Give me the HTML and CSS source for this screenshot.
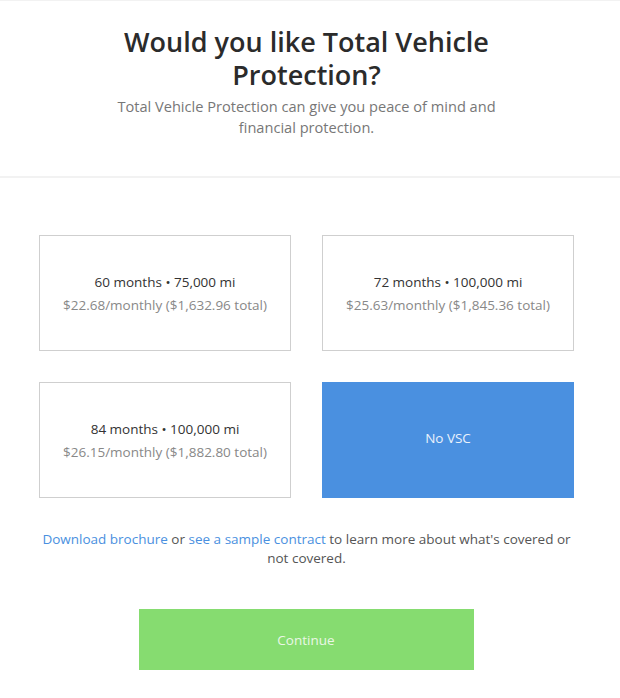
FILE: index.html
```html
<!DOCTYPE html>
<html>
<head>
<meta charset="utf-8">
<link rel="stylesheet" href="styles.css">
</head>
<body>
<div class="page">
  <header class="header">
    <h1 class="title">Would you like Total Vehicle Protection?</h1>
    <p class="subtitle">Total Vehicle Protection can give you peace of mind and financial protection.</p>
  </header>
  <main class="content">
    <div class="options">
      <div class="option">
        <div class="term">60 months • 75,000 mi</div>
        <div class="price">$22.68/monthly ($1,632.96 total)</div>
      </div>
      <div class="option">
        <div class="term">72 months • 100,000 mi</div>
        <div class="price">$25.63/monthly ($1,845.36 total)</div>
      </div>
      <div class="option">
        <div class="term">84 months • 100,000 mi</div>
        <div class="price">$26.15/monthly ($1,882.80 total)</div>
      </div>
      <div class="option selected">
        <div class="term">No VSC</div>
      </div>
    </div>
    <p class="info"><a class="link" href="#">Download brochure</a> or <a class="link" href="#">see a sample contract</a> to learn more about what's covered or not covered.</p>
    <div class="actions">
      <button class="continue">Continue</button>
    </div>
  </main>
</div>
</body>
</html>
```
FILE: styles.css
```css
html, body {
  margin: 0;
  padding: 0;
  background: #fff;
}
body {
  font-family: "Open Sans", "Noto Sans", sans-serif;
  color: #333;
}
.page {
  width: 620px;
  border-top: 1px solid #f2f2f2;
}
.header {
  text-align: center;
  padding: 24px 7px 38px 0;
  border-bottom: 2px solid #f2f2f2;
}
.title {
  margin: 0 auto;
  width: 420px;
  font-size: 27px;
  font-weight: 600;
  line-height: 33px;
  color: #2b2b2b;
}
.subtitle {
  margin: 5px auto 0;
  width: 430px;
  font-size: 14.6px;
  line-height: 21px;
  color: #777;
}
.content {
  padding: 57px 46px 0 39px;
}
.options {
  display: grid;
  grid-template-columns: 252px 252px;
  column-gap: 31px;
  row-gap: 31px;
}
.option {
  height: 116px;
  box-sizing: border-box;
  border: 1px solid #cfcfcf;
  padding-top: 2px;
  display: flex;
  flex-direction: column;
  align-items: center;
  justify-content: center;
  font-size: 13.5px;
  line-height: 23px;
}
.term {
  color: #333;
}
.price {
  color: #888;
}
.option.selected {
  background: #4a90e0;
  border-color: #4a90e0;
  padding: 0 0 4px;
}
.option.selected .term {
  color: #eaf2fc;
}
.info {
  margin: 32px 0 0;
  text-align: center;
  font-size: 13.5px;
  line-height: 19px;
  color: #555;
}
.link {
  color: #4a90e0;
  text-decoration: none;
}
.actions {
  display: flex;
  justify-content: center;
  padding-top: 41px;
}
.continue {
  width: 335px;
  height: 61px;
  border: none;
  background: #86dc70;
  color: #eaf7e6;
  font-family: "Open Sans", "Noto Sans", sans-serif;
  font-size: 13.5px;
  margin-left: -1px;
}
```
